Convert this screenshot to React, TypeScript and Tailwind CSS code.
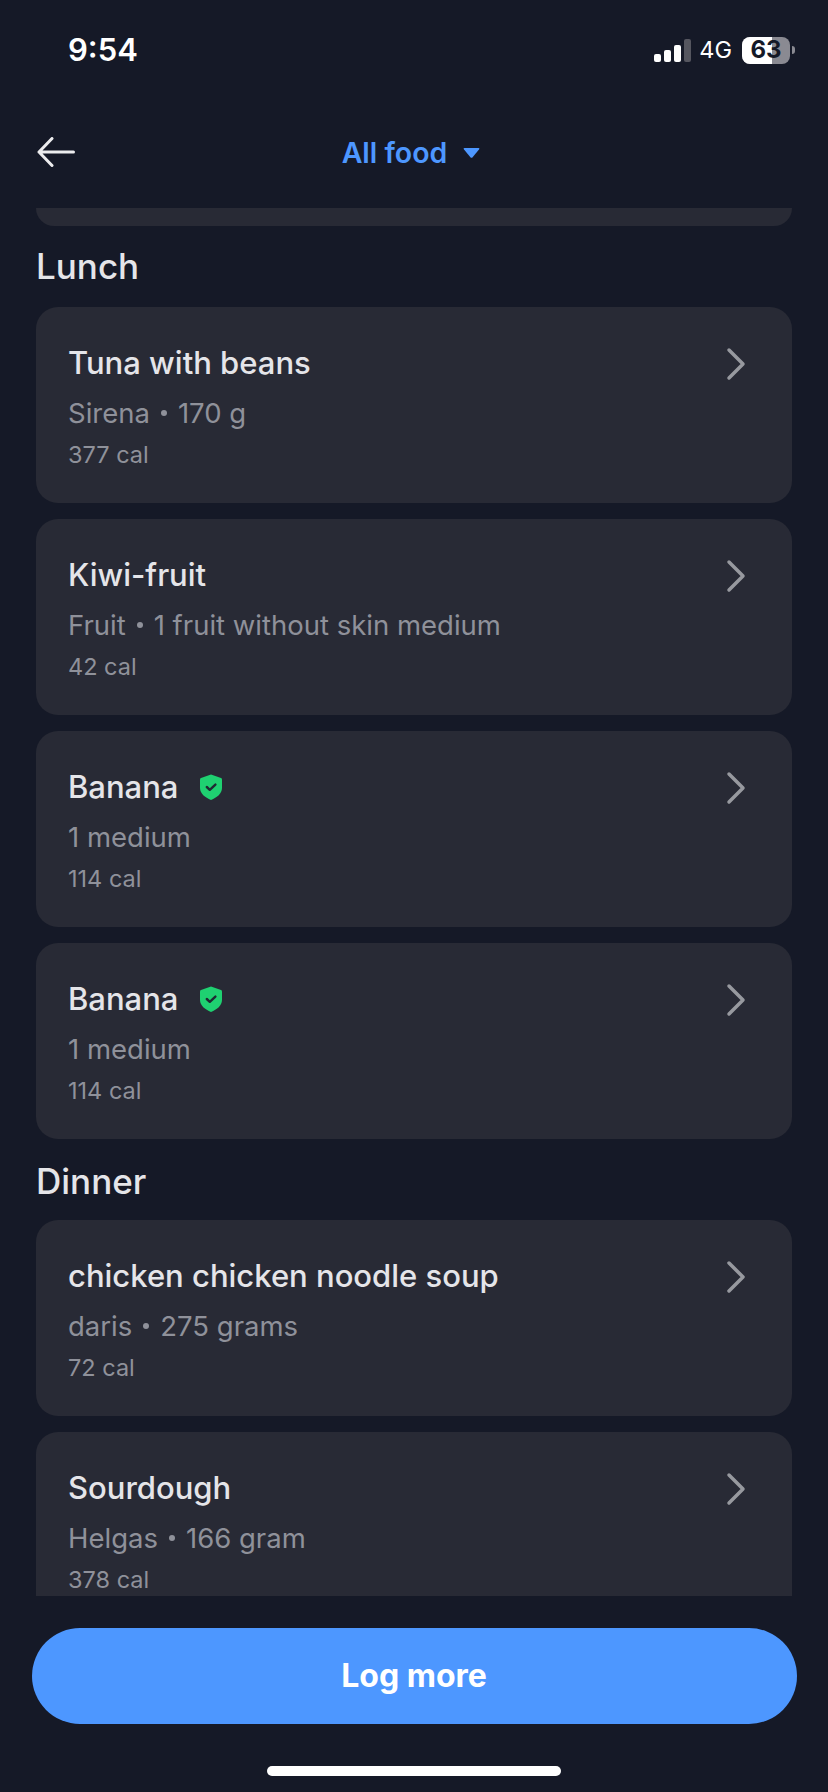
import React from 'react'
import { ChevronRight } from 'lucide-react'

type Food = {
    name: string
    detail: string[]
    cal: string
    verified?: boolean
}

const lunch: Food[] = [
    { name: 'Tuna with beans', detail: ['Sirena', '170 g'], cal: '377 cal' },
    { name: 'Kiwi-fruit', detail: ['Fruit', '1 fruit without skin medium'], cal: '42 cal' },
    { name: 'Banana', detail: ['1 medium'], cal: '114 cal', verified: true },
    { name: 'Banana', detail: ['1 medium'], cal: '114 cal', verified: true },
]

const dinner: Food[] = [
    { name: 'chicken chicken noodle soup', detail: ['daris', '275 grams'], cal: '72 cal' },
    { name: 'Sourdough', detail: ['Helgas', '166 gram'], cal: '378 cal' },
]

const VerifiedShield = () => (
    <svg width="22" height="26" viewBox="0 0 22 26" className="ml-[22px] shrink-0">
        <path
            d="M11 0.5 L21 4 Q22 4.4 22 5.5 V14 C22 19.5 17 23.5 11 26 C5 23.5 0 19.5 0 14 V5.5 Q0 4.4 1 4 Z"
            fill="#1fd171"
        />
        <path d="M6.8 13 L9.8 15.8 L15.4 10.6" fill="none" stroke="#1f2a33" strokeWidth="2.4" strokeLinecap="round" strokeLinejoin="round" />
    </svg>
)

const FoodCard = ({ food }: { food: Food }) => (
    <div className="relative shrink-0 rounded-[22px] bg-[#282a35] pl-[32px] pr-[36px] pt-[36px] pb-[34px]">
        <div className="flex h-[40px] items-center text-[31px] font-medium leading-[40px] text-[#e5e5e9]">
            {food.name}
            {food.verified && <VerifiedShield />}
        </div>
        <div className="mt-[12px] flex h-[36px] items-center text-[27.5px] leading-[36px] text-[#8f919a]">
            {food.detail.map((part, i) => (
                <React.Fragment key={part}>
                    {i > 0 && <span className="mx-[11px] h-[6px] w-[6px] rounded-full bg-[#8f919a]" />}
                    <span>{part}</span>
                </React.Fragment>
            ))}
        </div>
        <div className="mt-[10px] text-[23.5px] leading-[28px] text-[#8f919a]">{food.cal}</div>
        <ChevronRight className="absolute right-[28px] top-[29px] h-[56px] w-[56px] text-[#97999f]" strokeWidth={1.5} />
    </div>
)

const StatusBar = () => (
    <div className="flex h-[100px] shrink-0 items-center justify-between pl-[68px] pr-[33px]">
        <span className="mt-[-2px] text-[31px] font-semibold leading-none text-white">9:54</span>
        <div className="flex items-center">
            <div className="flex items-end gap-[3px]">
                <span className="h-[8px] w-[7px] rounded-[2px] bg-white" />
                <span className="h-[12px] w-[7px] rounded-[2px] bg-white" />
                <span className="h-[17px] w-[7px] rounded-[2px] bg-white" />
                <span className="h-[23px] w-[7px] rounded-[2px] bg-[#55565f]" />
            </div>
            <span className="ml-[8px] text-[23.5px] leading-none text-white">4G</span>
            <div className="relative ml-[10px] h-[27px] w-[48px] overflow-hidden rounded-[8px] bg-[#8a8a92]">
                <div className="h-full w-[30px] bg-white" />
                <span className="absolute inset-0 flex items-center justify-center text-[24px] font-bold leading-none text-[#151927]">63</span>
            </div>
            <span className="ml-[2px] h-[8px] w-[3px] rounded-r-[3px] bg-[#8a8a92]" />
        </div>
    </div>
)

const Header = () => (
    <div className="relative flex h-[108px] shrink-0 items-center justify-center">
        <svg width="38" height="30" viewBox="0 0 38 30" className="absolute left-[37px] top-[37px]">
            <path d="M36.5 15 H2 M15 1.5 L2 15 L15 28.5" fill="none" stroke="#ececee" strokeWidth="3" strokeLinecap="round" strokeLinejoin="round" />
        </svg>
        <div className="mt-[-2px] flex items-center pr-[6px] text-[#4d97ff]">
            <span className="text-[28.5px] font-semibold leading-none">All food</span>
            <svg width="17" height="10" viewBox="0 0 17 10" className="ml-[16px]">
                <path d="M1.5 0 H15.5 Q17 0 16 1.4 L9.6 9.2 Q8.5 10.2 7.4 9.2 L1 1.4 Q0 0 1.5 0 Z" fill="currentColor" />
            </svg>
        </div>
    </div>
)

const App = () => {
    return (
        <div className="flex h-[1792px] w-[828px] flex-col overflow-hidden bg-[#151927] font-['Inter',sans-serif]">
            <StatusBar />
            <Header />

            {/* Scrolling food list */}
            <div className="flex h-[1388px] shrink-0 flex-col overflow-hidden px-[36px]">
                <div className="h-[18px] shrink-0 rounded-b-[22px] bg-[#282a35]" />
                <h2 className="mt-[18px] mb-[19px] text-[35px] font-medium leading-[44px] text-[#e5e5e9]">Lunch</h2>
                <div className="flex flex-col gap-[16px]">
                    {lunch.map((food, i) => (
                        <FoodCard key={i} food={food} />
                    ))}
                </div>
                <h2 className="mt-[20px] mb-[17px] text-[35px] font-medium leading-[44px] text-[#e5e5e9]">Dinner</h2>
                <div className="flex flex-col gap-[16px]">
                    {dinner.map((food, i) => (
                        <FoodCard key={i} food={food} />
                    ))}
                </div>
            </div>

            <div className="flex flex-1 flex-col items-center">
                <button className="mt-[32px] flex h-[96px] w-[765px] items-center justify-center rounded-[48px] bg-[#4d97ff] text-[32px] font-bold text-white">
                    Log more
                </button>
                <div className="mt-[42px] h-[10px] w-[294px] rounded-full bg-white" />
            </div>
        </div>
    )
}

export default App
